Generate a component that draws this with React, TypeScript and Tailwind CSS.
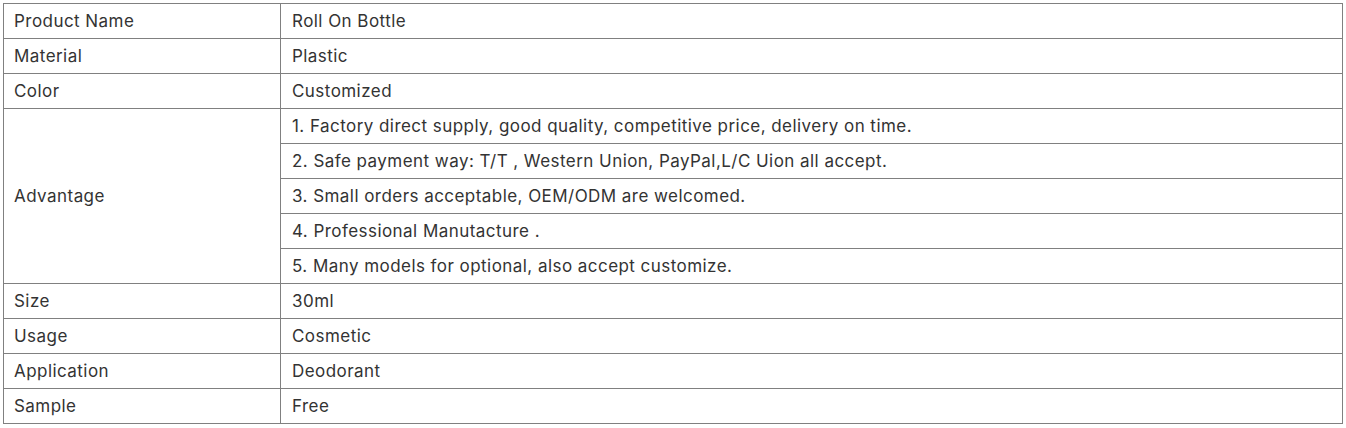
const rows: [string, string[]][] = [
  ["Product Name", ["Roll On Bottle"]],
  ["Material", ["Plastic"]],
  ["Color", ["Customized"]],
  [
    "Advantage",
    [
      "1. Factory direct supply, good quality, competitive price, delivery on time.",
      "2. Safe payment way: T/T , Western Union, PayPal,L/C Uion all accept.",
      "3. Small orders acceptable, OEM/ODM are welcomed.",
      "4. Professional Manutacture .",
      "5. Many models for optional, also accept customize.",
    ],
  ],
  ["Size", ["30ml"]],
  ["Usage", ["Cosmetic"]],
  ["Application", ["Deodorant"]],
  ["Sample", ["Free"]],
];

export default function App() {
  const cell = "border border-[#808080] h-[35px] pr-[10px] pt-[2px] pb-0 align-middle";
  return (
    <div className="bg-white w-[1346px] h-[428px] p-[3px] font-['Inter',sans-serif] text-[17px] tracking-[0.45px] text-[#333]">
      <table className="w-[1340px] border-collapse table-fixed">
        <colgroup>
          <col className="w-[277px]" />
          <col />
        </colgroup>
        <tbody>
          {rows.map(([label, values]) =>
            values.map((v, i) => (
              <tr key={label + i}>
                {i === 0 && (
                  <td className={cell + " pl-[10px]"} rowSpan={values.length}>
                    {label}
                  </td>
                )}
                <td className={cell + " pl-[11px]"}>{v}</td>
              </tr>
            ))
          )}
        </tbody>
      </table>
    </div>
  );
}
